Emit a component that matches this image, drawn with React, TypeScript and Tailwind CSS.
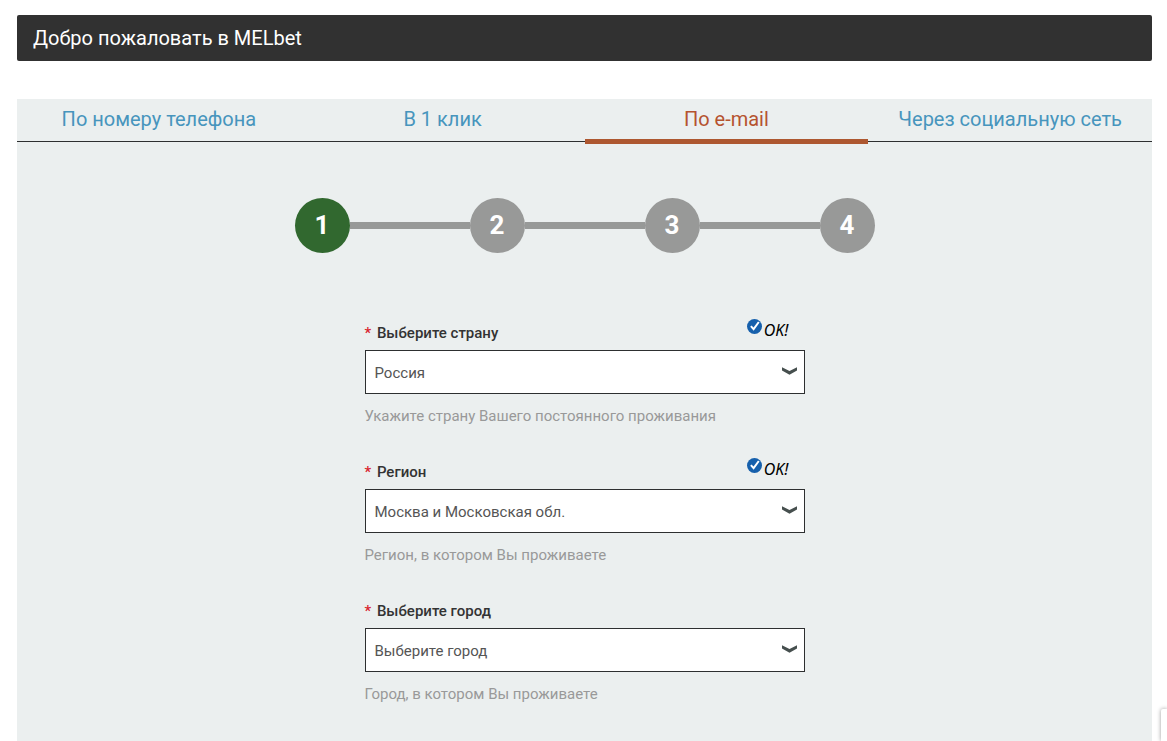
import React, { useState } from "react";

const tabs = ["По номеру телефона", "В 1 клик", "По e-mail", "Через социальную сеть"];
const steps = [1, 2, 3, 4];

const fields = [
  {
    id: "country",
    label: "Выберите страну",
    hint: "Укажите страну Вашего постоянного проживания",
    options: ["Россия", "Беларусь", "Казахстан"],
    valid: true,
  },
  {
    id: "region",
    label: "Регион",
    hint: "Регион, в котором Вы проживаете",
    options: ["Москва и Московская обл.", "Ленинградская обл."],
    valid: true,
  },
  {
    id: "city",
    label: "Выберите город",
    hint: "Город, в котором Вы проживаете",
    options: ["Выберите город", "Москва", "Химки"],
    valid: false,
  },
];

function ValidMark() {
  return (
    <span className="flex gap-0.5 pr-4">
      <svg className="mt-px h-[15px] w-[15px]" viewBox="0 0 15 15" aria-hidden="true">
        <circle cx="7.5" cy="7.5" r="7.5" fill="#1660ac" />
        <path d="M3.9 7.2l2.7 3L11.8 3" fill="none" stroke="#fff" strokeWidth="2" />
      </svg>
      <span className="pt-0.5 font-['Noto_Sans',sans-serif] text-base leading-5 text-black italic">
        OK!
      </span>
    </span>
  );
}

type FieldProps = (typeof fields)[number];

function SelectField({ id, label, hint, options, valid }: FieldProps) {
  const [value, setValue] = useState(options[0]);

  return (
    <div className="mb-[29px]">
      <div className="flex h-8 justify-between">
        <label htmlFor={id} className="pt-[3px] text-[15px] leading-6 font-medium text-[#333]">
          <span className="mr-0.5 text-[#d9232e]">*</span> {label}
        </label>
        {valid && <ValidMark />}
      </div>
      <div className="relative">
        <select
          id={id}
          value={value}
          onChange={(e) => setValue(e.target.value)}
          className="block h-11 w-full appearance-none border border-[#2d2f30] bg-white pt-0.5 pr-10 pl-[9px] text-[15px] text-[#555]"
        >
          {options.map((option) => (
            <option key={option}>{option}</option>
          ))}
        </select>
        <svg
          className="pointer-events-none absolute top-[17px] right-2 h-2 w-[15px]"
          viewBox="0 0 15 8"
          aria-hidden="true"
        >
          <path d="M0 0.3L7.5 4 15 0.3V3.4L7.5 7.7 0 3.4Z" fill="#464f4e" />
        </svg>
      </div>
      <p className="mt-[10px] text-[15px] leading-6 text-[#999]">{hint}</p>
    </div>
  );
}

export default function App() {
  const [active, setActive] = useState(2);

  return (
    <div className="flex min-h-screen flex-col bg-white pt-[15px] pr-[15px] pl-[17px] font-[Roboto,sans-serif]">
      <h1 className="rounded-xs bg-[#313131] px-4 py-[11px] text-[20px] leading-6 text-white">
        Добро пожаловать в MELbet
      </h1>

      <main className="mt-[38px] grow bg-[#ebefef]">
        <nav className="grid h-[43px] grid-cols-4 border-b border-[#2d2f30]">
          {tabs.map((tab, i) => (
            <button
              key={tab}
              type="button"
              onClick={() => setActive(i)}
              className={
                i === active
                  ? "-mb-[3px] h-[45px] border-b-5 border-[#ad5730] text-[20px] leading-10 text-[#b5532f]"
                  : "h-10 text-[20px] leading-10 text-[#4795bd]"
              }
            >
              {tab}
            </button>
          ))}
        </nav>

        <ol className="mx-auto mt-14 flex max-w-[580px] items-center">
          {steps.map((step) => (
            <React.Fragment key={step}>
              {step > 1 && <li aria-hidden="true" className="h-[7px] grow bg-[#979998]" />}
              <li
                className={`flex h-[55px] w-[55px] items-center justify-center rounded-full text-[26px] font-bold text-white ${
                  step === 1 ? "bg-[#31682f]" : "bg-[#989998]"
                }`}
              >
                {step}
              </li>
            </React.Fragment>
          ))}
        </ol>

        <form className="mx-auto mt-[65px] max-w-[440px]">
          {fields.map((field) => (
            <SelectField key={field.id} {...field} />
          ))}
        </form>
      </main>

      <aside className="fixed right-0 bottom-0 h-8 w-1.5 rounded-tl-xs bg-white shadow-[0_0_4px_rgba(0,0,0,0.4)]" />
    </div>
  );
}
